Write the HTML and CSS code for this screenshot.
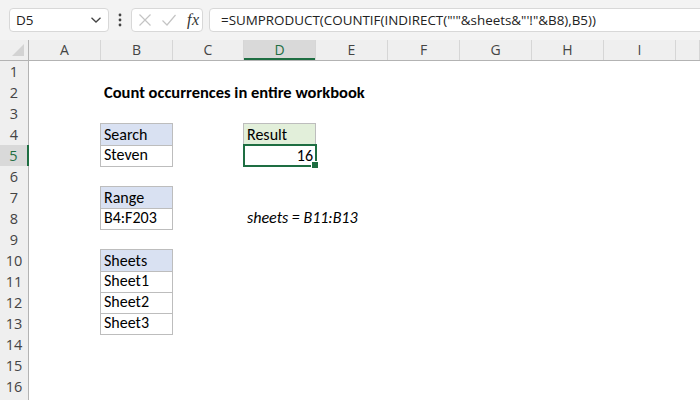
FILE: index.html
```html
<!DOCTYPE html>
<html>
<head>
<meta charset="utf-8">
<link rel="stylesheet" href="styles.css">
</head>
<body>
<div class="topbar">
  <div class="namebox"><span>D5</span>
    <svg class="chev" width="12" height="8" viewBox="0 0 12 8"><path d="M1.5 1.8 L6 6 L10.5 1.8" fill="none" stroke="#444" stroke-width="1.3"/></svg>
  </div>
  <div class="dots">
    <svg width="4" height="14" viewBox="0 0 4 14"><circle cx="2" cy="2" r="1.4" fill="#444"/><circle cx="2" cy="7" r="1.4" fill="#444"/><circle cx="2" cy="12" r="1.4" fill="#444"/></svg>
  </div>
  <div class="fxbox">
    <svg width="14" height="14" viewBox="0 0 14 14"><path d="M1.5 1.5 L12.5 12.5 M12.5 1.5 L1.5 12.5" stroke="#c4c4c4" stroke-width="1.2" fill="none"/></svg>
    <svg width="16" height="14" viewBox="0 0 16 14"><path d="M1.5 7.5 L6 12 L14.5 2" stroke="#c4c4c4" stroke-width="1.2" fill="none"/></svg>
    <span class="fx">fx</span>
  </div>
  <div class="formula">=SUMPRODUCT(COUNTIF(INDIRECT("'"&amp;sheets&amp;"'!"&amp;B8),B5))</div>
</div>

<div class="sheet">
  <div class="row colhead">
    <div class="corner"><svg width="14" height="14" viewBox="0 0 14 14"><polygon points="13,1 13,13 1,13" fill="#d3d3d3"/></svg></div>
    <div class="ch">A</div><div class="ch">B</div><div class="ch">C</div><div class="ch sel">D</div><div class="ch">E</div><div class="ch">F</div><div class="ch">G</div><div class="ch">H</div><div class="ch">I</div><div class="ch"></div>
  </div>
  <div class="row"><div class="rh">1</div></div>
  <div class="row"><div class="rh">2</div><div class="c"></div><div class="c title">Count occurrences in entire workbook</div></div>
  <div class="row"><div class="rh">3</div></div>
  <div class="row"><div class="rh">4</div><div class="c"></div><div class="c box top hblue">Search</div><div class="c"></div><div class="c box top hgreen">Result</div></div>
  <div class="row"><div class="rh sel">5</div><div class="c"></div><div class="c box">Steven</div><div class="c"></div><div class="c box num active">16<span class="handle"></span></div></div>
  <div class="row"><div class="rh">6</div></div>
  <div class="row"><div class="rh">7</div><div class="c"></div><div class="c box top hblue">Range</div></div>
  <div class="row"><div class="rh">8</div><div class="c"></div><div class="c box">B4:F203</div><div class="c"></div><div class="c note">sheets = B11:B13</div></div>
  <div class="row"><div class="rh">9</div></div>
  <div class="row"><div class="rh">10</div><div class="c"></div><div class="c box top hblue">Sheets</div></div>
  <div class="row"><div class="rh">11</div><div class="c"></div><div class="c box">Sheet1</div></div>
  <div class="row"><div class="rh">12</div><div class="c"></div><div class="c box">Sheet2</div></div>
  <div class="row"><div class="rh">13</div><div class="c"></div><div class="c box">Sheet3</div></div>
  <div class="row"><div class="rh">14</div></div>
  <div class="row"><div class="rh">15</div></div>
  <div class="row"><div class="rh">16</div></div>
  <div class="row"><div class="rh"></div></div>
</div>
</body>
</html>
```
FILE: styles.css
```css
html, body {
  margin: 0;
  padding: 0;
}
body {
  width: 700px;
  height: 400px;
  overflow: hidden;
  background: #ffffff;
  font-family: "Open Sans", "Noto Sans", sans-serif;
}
.topbar {
  display: flex;
  align-items: center;
  height: 40px;
  background: #f3f3f3;
  padding-left: 9px;
  box-sizing: border-box;
}
.namebox {
  width: 100px;
  height: 24px;
  box-sizing: border-box;
  border: 1px solid #d8d8d8;
  border-radius: 4px;
  background: #fff;
  display: flex;
  align-items: center;
  justify-content: space-between;
  padding: 0 6px 0 6px;
  font-size: 13.5px;
  color: #222;
}
.dots {
  width: 22px;
  display: flex;
  justify-content: center;
  align-items: center;
}
.dots svg { display: block; }
.fxbox {
  width: 72px;
  height: 24px;
  box-sizing: border-box;
  border: 1px solid #d8d8d8;
  border-radius: 4px;
  background: #fff;
  display: flex;
  align-items: center;
  gap: 9px;
  padding-left: 6px;
}
.fxbox svg { display: block; }
.fx {
  font-family: "Liberation Serif", serif;
  font-style: italic;
  font-size: 16px;
  color: #333;
  margin-left: 1px;
  letter-spacing: 0.5px;
}
.formula {
  flex: 1;
  height: 24px;
  box-sizing: border-box;
  margin-left: 6px;
  margin-right: -10px;
  border: 1px solid #d8d8d8;
  border-radius: 4px;
  background: #fff;
  padding-left: 11px;
  font-size: 13.4px;
  line-height: 22px;
  color: #222;
  white-space: nowrap;
  overflow: hidden;
}
.sheet {
  display: flex;
  flex-direction: column;
}
.row {
  display: grid;
  grid-template-columns: 29px 72px 72px 71px 72px 72px 72px 72px 72px 72px 24px;
  height: 21px;
}
.colhead {
  background: #efefef;
  box-sizing: border-box;
  border-bottom: 1px solid #b3b3b3;
}
.corner {
  display: flex;
  justify-content: flex-end;
  align-items: flex-end;
  padding: 0 3px 3px 0;
  border-right: 1px solid #b3b3b3;
}
.corner svg { display: block; }
.ch {
  border-right: 1px solid #d6d6d6;
  text-align: center;
  font-size: 14px;
  line-height: 20px;
  color: #444;
}
.ch.sel {
  background: #d9d9d9;
  color: #1e6e42;
  box-shadow: inset 0 -2px 0 #1e6e42;
}
.rh {
  background: #efefef;
  box-sizing: border-box;
  border-right: 1px solid #b3b3b3;
  border-bottom: 1px solid #d9d9d9;
  text-align: center;
  font-size: 14.5px;
  line-height: 21px;
  color: #444;
}
.rh.sel {
  background: #d9d9d9;
  color: #1e6e42;
  border-right: 2px solid #1e6e42;
}
.c {
  position: relative;
  box-sizing: border-box;
  padding: 0 3px;
  font-family: "Carlito", "Lato", sans-serif;
  font-size: 16px;
  line-height: 20px;
  color: #000;
  white-space: nowrap;
}
.title {
  font-weight: bold;
  font-size: 16.5px;
  overflow: visible;
}
.box {
  border-left: 1px solid #bdbdbd;
  border-right: 1px solid #bdbdbd;
  border-bottom: 1px solid #bdbdbd;
  margin-left: -1px;
  margin-right: 0;
}
.box.top {
  border-top: 1px solid #bdbdbd;
  margin-top: -1px;
  line-height: 21px;
}
.hblue { background: #d9e1f2; }
.hgreen { background: #e2efda; }
.num { text-align: right; }
.active {
  border: 2px solid #1e6e42;
  margin-top: -1px;
  margin-left: -1px;
  margin-right: -1px;
  height: 23px;
  line-height: 20px;
  padding-right: 2px;
}
.handle {
  position: absolute;
  right: -4px;
  bottom: -4px;
  width: 6px;
  height: 6px;
  background: #1e6e42;
  border: 1px solid #fff;
}
.note {
  font-style: italic;
}
```
